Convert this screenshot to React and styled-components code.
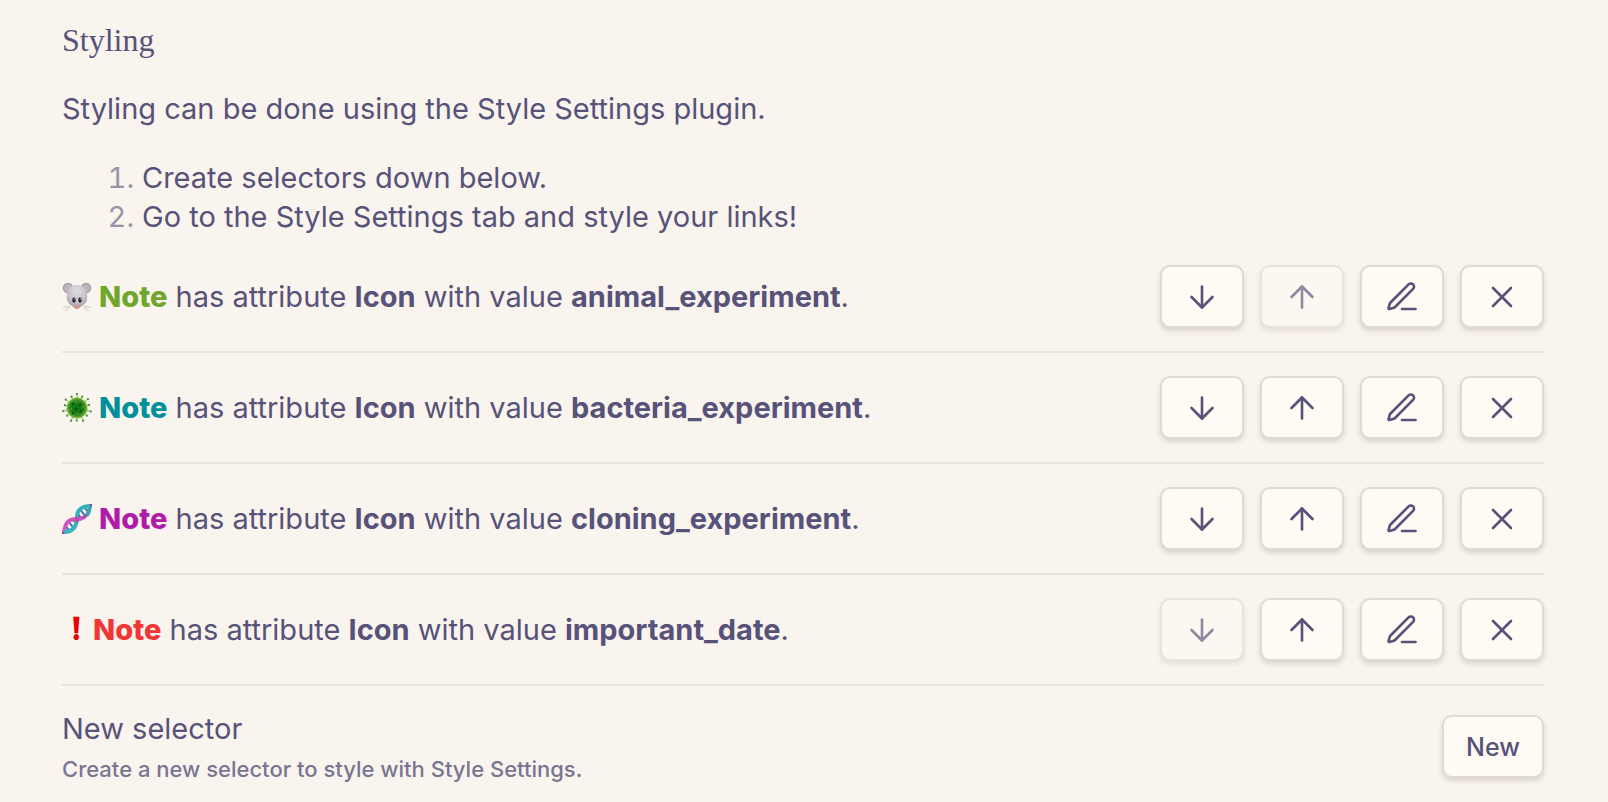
import React from "react";
import styled, { createGlobalStyle } from "styled-components";
import { ArrowDown, ArrowUp, X } from "lucide-react";

const GlobalStyle = createGlobalStyle`
  *, *::before, *::after { box-sizing: border-box; }
  body {
    margin: 0;
    background: #f9f4ed;
    color: #575279;
    font-family: Inter, "Liberation Sans", sans-serif;
    font-size: 29px;
    line-height: 39px;
  }
`;

const Page = styled.main`
  padding: 20px 64px 20px 62px;
`;

const Heading = styled.h2`
  margin: 0;
  font-family: "Liberation Serif", serif;
  font-size: 32px;
  font-weight: 400;
  line-height: 40px;
`;

const Intro = styled.p`
  margin: 29px 0 30px;
`;

const Steps = styled.ol`
  margin: 0 0 29px;
  padding-left: 80px;

  li::marker {
    color: #9893a5;
  }
`;

const SelectorList = styled.ul`
  margin: 0;
  padding: 0;
  list-style: none;
`;

const SelectorRow = styled.li`
  display: flex;
  align-items: center;
  justify-content: space-between;
  gap: 16px;
  padding: 23px 0;
  border-bottom: 2px solid #e8e3e1;

  &:first-child {
    padding-top: 0;
  }
`;

const Description = styled.div`
  display: flex;
  align-items: center;
  gap: 7px;
  min-width: 0;
`;

const Emoji = styled.svg`
  flex: none;
  width: 30px;
  height: 30px;
`;

const Mark = styled.span`
  flex: none;
  width: 24px;
  padding-left: 4px;
  color: #e60000;
  font-family: "DejaVu Sans", sans-serif;
  font-size: 32px;
  text-align: center;
`;

const NoteName = styled.strong`
  color: ${(p) => p.$color};
  font-weight: 800;
`;

const Value = styled.strong`
  font-weight: 700;
`;

const Actions = styled.div`
  display: flex;
  flex: none;
  gap: 16px;
`;

const Button = styled.button`
  display: flex;
  flex: none;
  align-items: center;
  justify-content: center;
  height: 63px;
  min-width: 84px;
  padding: 0 22px;
  border: 2px solid #dfdad5;
  border-radius: 10px;
  background: #fffaf3;
  box-shadow: 0 3px 5px rgba(60, 50, 40, 0.16);
  color: #575279;
  font-family: inherit;
  font-size: 25px;
  font-weight: 500;

  &:disabled {
    opacity: 0.65;
  }
`;

const NewRow = styled.div`
  display: flex;
  align-items: center;
  justify-content: space-between;
  gap: 16px;
  padding-top: 23px;
`;

const Hint = styled.p`
  margin: 6px 0 0;
  color: #797593;
  font-size: 22px;
  font-weight: 500;
  line-height: 30px;
`;

function MouseFace() {
  return (
    <Emoji viewBox="0 0 30 30" role="img" aria-label="Mouse">
      <defs>
        <radialGradient id="fur" cx="0.5" cy="0.25" r="0.75">
          <stop offset="0" stopColor="#dedce2" />
          <stop offset="0.6" stopColor="#c5c2cc" />
          <stop offset="1" stopColor="#9c98a4" />
        </radialGradient>
      </defs>
      <circle cx="6" cy="6" r="5.3" fill="#a5a1aa" />
      <circle cx="24" cy="6" r="5.3" fill="#a5a1aa" />
      <circle cx="6" cy="6.3" r="3.8" fill="#c3b4ba" />
      <circle cx="24" cy="6.3" r="3.8" fill="#c3b4ba" />
      <path d="M15 3c6.500 0 10.200 5 10.200 12.300 0 5-3 7.500-6 9.200-1.400.8-2.200 2.500-4.200 2.500s-2.800-1.700-4.200-2.500c-3-1.700-6-4.200-6-9.200C4.800 8 8.500 3 15 3Z" fill="url(#fur)" />
      <path d="M8 24.500 1 25.200M8.500 25.500 3 28.700M22 24.500l7 .7M21.500 25.500l5.500 3.200" stroke="#c9c3c1" strokeWidth="0.9" />
      <ellipse cx="12" cy="18" rx="1.700" ry="2.700" fill="#202027" />
      <ellipse cx="18" cy="18" rx="1.700" ry="2.700" fill="#202027" />
      <circle cx="12.400" cy="17" r="0.6" fill="#fff" />
      <circle cx="18.400" cy="17" r="0.6" fill="#fff" />
      <ellipse cx="15" cy="24.800" rx="2" ry="1.600" fill="#ec8d6c" />
    </Emoji>
  );
}

const SPIKES = [0, 24, 51, 76, 104, 128, 154, 181, 205, 232, 257, 283, 307, 334];

function Microbe() {
  return (
    <Emoji viewBox="0 0 30 30" role="img" aria-label="Microbe">
      <defs>
        <radialGradient id="cell">
          <stop offset="0" stopColor="#087411" />
          <stop offset="0.65" stopColor="#26801a" />
          <stop offset="1" stopColor="#6fb637" />
        </radialGradient>
      </defs>
      {SPIKES.map((angle, i) => (
        <g key={angle} transform={`rotate(${angle} 15 15)`} fill="#4c9430" stroke="#7fb657">
          <path d={i % 2 ? "M15 6V2.500" : "M15 6V1"} strokeWidth="0.9" />
          <circle cx="15" cy={i % 2 ? 2.5 : 0.9} r="1.100" stroke="none" />
        </g>
      ))}
      <circle cx="15" cy="15" r="10.200" fill="url(#cell)" stroke="#80c041" strokeWidth="0.9" strokeDasharray="2 1" />
      <g fill="#045c0d">
        <circle cx="11" cy="11" r="1.500" />
        <circle cx="18" cy="12" r="1.300" />
        <circle cx="14" cy="16" r="1.500" />
        <circle cx="19" cy="18" r="1.500" />
        <circle cx="11" cy="20" r="1.200" />
      </g>
      <g fill="#65ad38">
        <circle cx="14" cy="9" r="0.8" />
        <circle cx="21" cy="14" r="0.8" />
        <circle cx="9" cy="16" r="0.8" />
        <circle cx="16" cy="21" r="0.8" />
      </g>
    </Emoji>
  );
}

function Dna() {
  return (
    <Emoji viewBox="0 0 30 30" role="img" aria-label="DNA">
      <path d="M3 27C3 19 7 15 15 15S27 11 27 3C19 3 15 7 15 15S11 27 3 27Z" fill="#f1f3fa" />
      <path d="M16 10l4 5M18.500 6l5.500 7M23 4l3.500 4.500M3.500 21.500l3.500 5M6.500 17.500l5.500 7M11 15.500l3.500 4.500" stroke="#3f5fa6" strokeWidth="1.700" />
      <path d="M15 15C23 15 27 11 28 1" fill="none" stroke="#a94fb4" strokeWidth="3.400" />
      <path d="M25 11.500C27 9 28 6 28 1" fill="none" stroke="#2caab5" strokeWidth="3.600" />
      <path d="M2 29C3 20 5 15 15 15c2 0 4-.3 5.500-1" fill="none" stroke="#cf55c0" strokeWidth="4" />
      <path d="M2 28c8 0 12-4 13-12" fill="none" stroke="#3cb4bd" strokeWidth="4" />
      <path d="M14.500 18c.6-1.500.2-3 .5-5" fill="none" stroke="#bd4bad" strokeWidth="3.600" />
      <path d="M15 13C15 6 20 2 29 2" fill="none" stroke="#35b0b9" strokeWidth="4" />
      <path d="M27 0h3v3ZM0 27v3h3Z" fill="#86408f" />
    </Emoji>
  );
}

function PenLine() {
  return (
    <svg width="36" height="36" viewBox="0 0 24 24" fill="none" stroke="currentColor" strokeWidth="1.75" strokeLinecap="round" strokeLinejoin="round" aria-hidden="true">
      <path d="M12 20h9" />
      <path d="M16.376 3.622a1 1 0 0 1 3.002 3.002L7.368 18.635a2 2 0 0 1-.855.506l-2.872.838a.5.5 0 0 1-.62-.62l.838-2.872a2 2 0 0 1 .506-.854z" />
    </svg>
  );
}

const selectors = [
  { icon: <MouseFace />, color: "#6fa62b", value: "animal_experiment" },
  { icon: <Microbe />, color: "#00909b", value: "bacteria_experiment" },
  { icon: <Dna />, color: "#b01ba8", value: "cloning_experiment" },
  { icon: <Mark>❗&#xFE0E;</Mark>, color: "#f23535", value: "important_date" },
];

const arrow = { size: 36, strokeWidth: 1.75, "aria-hidden": true };

export default function App() {
  return (
    <Page>
      <GlobalStyle />
      <Heading>Styling</Heading>
      <Intro>Styling can be done using the Style Settings plugin.</Intro>
      <Steps>
        <li>Create selectors down below.</li>
        <li>Go to the Style Settings tab and style your links!</li>
      </Steps>
      <SelectorList>
        {selectors.map(({ icon, color, value }, i) => (
          <SelectorRow key={value}>
            <Description>
              {icon}
              <span>
                <NoteName $color={color}>Note</NoteName> has attribute <Value>Icon</Value> with value{" "}
                <Value>{value}</Value>.
              </span>
            </Description>
            <Actions>
              <Button type="button" aria-label="Move down" disabled={i === selectors.length - 1}>
                <ArrowDown {...arrow} />
              </Button>
              <Button type="button" aria-label="Move up" disabled={i === 0}>
                <ArrowUp {...arrow} />
              </Button>
              <Button type="button" aria-label="Edit">
                <PenLine />
              </Button>
              <Button type="button" aria-label="Remove">
                <X {...arrow} />
              </Button>
            </Actions>
          </SelectorRow>
        ))}
      </SelectorList>
      <NewRow>
        <div>
          <div>New selector</div>
          <Hint>Create a new selector to style with Style Settings.</Hint>
        </div>
        <Button type="button">New</Button>
      </NewRow>
    </Page>
  );
}
